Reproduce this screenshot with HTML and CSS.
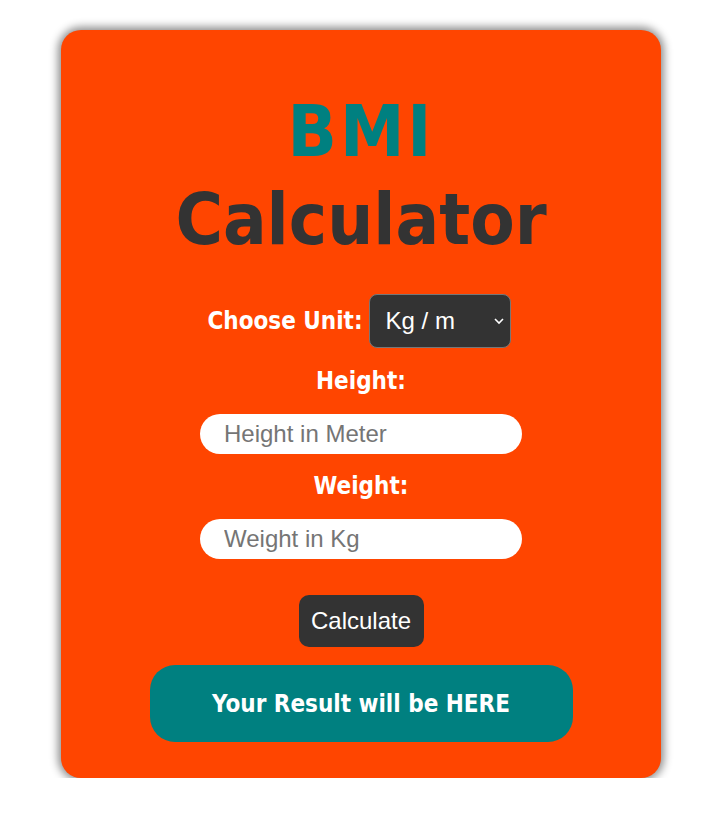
FILE: index.html
```html
<!DOCTYPE html>
<html>
<head>
<meta charset="utf-8">
<link rel="stylesheet" href="styles.css">
</head>
<body>
<div class="card">
  <h1 class="title"><span class="accent">BMI</span><br>Calculator</h1>
  <div class="unit-row">
    <label class="label">Choose Unit:</label>
    <div class="select">
      <span>Kg / m</span>
      <svg width="12" height="8" viewBox="0 0 12 8"><path d="M2 2 L6 6 L10 2" fill="none" stroke="#fff" stroke-width="1.6"/></svg>
    </div>
  </div>
  <div class="field">
    <label class="label">Height:</label>
    <input class="input" type="text" placeholder="Height in Meter">
  </div>
  <div class="field">
    <label class="label">Weight:</label>
    <input class="input" type="text" placeholder="Weight in Kg">
  </div>
  <button class="btn">Calculate</button>
  <div class="result">Your Result will be HERE</div>
</div>
</body>
</html>
```

FILE: styles.css
```css
html, body {
  margin: 0;
  padding: 0;
  background: #fff;
}
body {
  padding-top: 30px;
}
.card {
  width: 600px;
  height: 748px;
  box-sizing: border-box;
  margin-left: 61px;
  background: #ff4500;
  border-radius: 20px;
  box-shadow: 0 0 8px 3px rgba(0,0,0,0.45);
  display: flex;
  flex-direction: column;
  align-items: center;
  padding-top: 57px;
  font-family: "DejaVu Sans Condensed", "DejaVu Sans", sans-serif;
}
.title {
  margin: 0;
  font-size: 72px;
  line-height: 88px;
  font-weight: bold;
  color: #333;
  text-align: center;
}
.accent {
  color: #008080;
  letter-spacing: 3px;
}
.unit-row {
  margin-top: 31px;
  display: flex;
  align-items: center;
  gap: 6px;
  margin-left: -4px;
}
.label {
  color: #fff;
  font-weight: bold;
  font-size: 24px;
  line-height: 28px;
}
.select {
  width: 142px;
  height: 54px;
  box-sizing: border-box;
  background: #333;
  border: 1px solid #777;
  border-radius: 8px;
  display: flex;
  align-items: center;
  justify-content: space-between;
  padding: 0 5px 0 16px;
  color: #fff;
  font-family: "Liberation Sans", Arial, sans-serif;
  font-size: 24px;
}
.field {
  display: flex;
  flex-direction: column;
  align-items: center;
  margin-top: 19px;
}
.field + .field {
  margin-top: 18px;
}
.input {
  margin-top: 19px;
  width: 322px;
  height: 40px;
  box-sizing: border-box;
  border: none;
  border-radius: 20px;
  background: #fff;
  padding: 0 0 0 24px;
  font-family: "Liberation Sans", Arial, sans-serif;
  font-size: 24px;
  outline: none;
}
.input::placeholder {
  color: #757575;
}
.btn {
  margin-top: 36px;
  width: 125px;
  height: 52px;
  border: none;
  border-radius: 10px;
  background: #333;
  color: #fff;
  font-family: "Liberation Sans", Arial, sans-serif;
  font-size: 24px;
  padding: 0;
}
.result {
  margin-top: 18px;
  width: 423px;
  height: 77px;
  border-radius: 25px;
  background: #008080;
  color: #fff;
  font-weight: bold;
  font-size: 24px;
  display: flex;
  align-items: center;
  justify-content: center;
}
```
